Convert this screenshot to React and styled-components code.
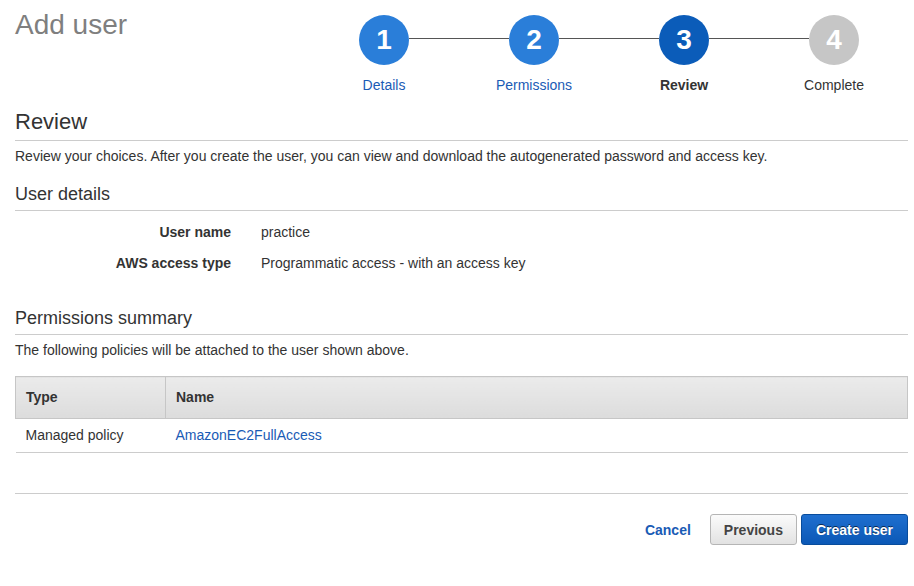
import React from "react";
import styled, { createGlobalStyle } from "styled-components";

const GlobalStyle = createGlobalStyle`
  body {
    margin: 0;
    background: #fff;
    color: #333;
    font-family: "Liberation Sans", Arial, Helvetica, sans-serif;
    font-size: 14px;
  }
`;

const Page = styled.div`
  padding: 0 6px 0 15px;
`;

const Header = styled.div`
  display: flex;
  justify-content: space-between;
  align-items: flex-start;
  padding-bottom: 15px;
`;

const PageTitle = styled.h1`
  margin: 9px 0 0;
  font-size: 28px;
  line-height: 32px;
  font-weight: normal;
  color: #7f7f7f;
`;

const Stepper = styled.div`
  display: flex;
  margin-right: -1px;
`;

const Step = styled.div`
  width: 150px;
  margin-top: 15px;
  display: flex;
  flex-direction: column;
  align-items: center;
`;

const CircleRow = styled.div`
  display: flex;
  align-items: flex-start;
  width: 100%;
`;

const Connector = styled.div`
  flex: 1;
  height: 1px;
  margin-top: 23px;
  background: ${(p) => (p.$hidden ? "transparent" : "#555")};
`;

const circleColors = {
  done: "#2a7ed9",
  current: "#0b5cb9",
  todo: "#c6c6c6",
};

const Circle = styled.div`
  width: 50px;
  height: 50px;
  border-radius: 50%;
  flex-shrink: 0;
  display: flex;
  align-items: center;
  justify-content: center;
  background: ${(p) => circleColors[p.$state]};
  color: #fff;
  font-size: 28px;
  font-weight: bold;
`;

const StepLabel = styled.div`
  margin-top: 11px;
  line-height: 18px;
  font-size: 14px;
  color: ${(p) => (p.$state === "done" ? "#1a5bb5" : "#333")};
  font-weight: ${(p) => (p.$state === "current" ? "bold" : "normal")};
`;

const SectionTitle = styled.h2`
  margin: ${(p) => p.$top}px 0 0;
  padding-bottom: 5px;
  border-bottom: 1px solid #cccccc;
  font-size: ${(p) => p.$size}px;
  line-height: ${(p) => p.$size + 4}px;
  font-weight: normal;
  color: #333;
`;

const Description = styled.p`
  margin: 5px 0 0;
  line-height: 20px;
  color: #333;
`;

const DetailList = styled.dl`
  margin: 11px 0 0;
  display: grid;
  grid-template-columns: 216px 1fr;
  column-gap: 30px;
  row-gap: 11px;
  line-height: 20px;
`;

const DetailLabel = styled.dt`
  text-align: right;
  font-weight: bold;
  color: #333;
`;

const DetailValue = styled.dd`
  margin: 0;
  color: #333;
`;

const Table = styled.table`
  margin-top: 16px;
  width: 100%;
  border-collapse: collapse;
`;

const HeadCell = styled.th`
  width: ${(p) => p.$width || "auto"};
  padding: 11px 10px;
  line-height: 19px;
  text-align: left;
  font-weight: bold;
  color: #333;
  background: linear-gradient(#ebebeb, #dcdcdc);
  border: 1px solid #c6c6c6;
`;

const Cell = styled.td`
  padding: 7px 10px;
  line-height: 19px;
  color: #333;
  border-bottom: 1px solid #cccccc;
`;

const Link = styled.a`
  color: #1a5bb5;
  text-decoration: none;
  cursor: pointer;
  font-weight: ${(p) => (p.$bold ? "bold" : "normal")};
`;

const Footer = styled.div`
  margin-top: 40px;
  padding-top: 20px;
  border-top: 1px solid #cccccc;
  display: flex;
  justify-content: flex-end;
  align-items: center;
  gap: 4px;
`;

const CancelLink = styled(Link)`
  margin-right: 15px;
`;

const Button = styled.button`
  box-sizing: border-box;
  height: 31px;
  padding: 0 ${(p) => (p.$primary ? 14 : 13)}px;
  border-radius: 3px;
  font-family: inherit;
  font-size: 14px;
  font-weight: bold;
  cursor: pointer;
  border: 1px solid ${(p) => (p.$primary ? "#084c9c" : "#b5b5b5")};
  color: ${(p) => (p.$primary ? "#fff" : "#444")};
  background: ${(p) =>
    p.$primary
      ? "linear-gradient(#1f6fcf, #0b58b6)"
      : "linear-gradient(#fbfbfb, #e2e2e2)"};
  text-shadow: ${(p) => (p.$primary ? "0 -1px 0 rgba(0,0,0,0.6)" : "none")};
`;

const steps = [
  { label: "Details", state: "done" },
  { label: "Permissions", state: "done" },
  { label: "Review", state: "current" },
  { label: "Complete", state: "todo" },
];

const details = [
  ["User name", "practice"],
  ["AWS access type", "Programmatic access - with an access key"],
];

export default function App() {
  return (
    <Page>
      <GlobalStyle />
      <Header>
        <PageTitle>Add user</PageTitle>
        <Stepper>
          {steps.map((step, i) => (
            <Step key={step.label}>
              <CircleRow>
                <Connector $hidden={i === 0} />
                <Circle $state={step.state}>{i + 1}</Circle>
                <Connector $hidden={i === steps.length - 1} />
              </CircleRow>
              <StepLabel $state={step.state}>{step.label}</StepLabel>
            </Step>
          ))}
        </Stepper>
      </Header>

      <SectionTitle $size={22} $top={0}>
        Review
      </SectionTitle>
      <Description>
        Review your choices. After you create the user, you can view and
        download the autogenerated password and access key.
      </Description>

      <SectionTitle $size={18} $top={17}>
        User details
      </SectionTitle>
      <DetailList>
        {details.map(([label, value]) => (
          <React.Fragment key={label}>
            <DetailLabel>{label}</DetailLabel>
            <DetailValue>{value}</DetailValue>
          </React.Fragment>
        ))}
      </DetailList>

      <SectionTitle $size={18} $top={34}>
        Permissions summary
      </SectionTitle>
      <Description>
        The following policies will be attached to the user shown above.
      </Description>

      <Table>
        <thead>
          <tr>
            <HeadCell $width="129px">Type</HeadCell>
            <HeadCell>Name</HeadCell>
          </tr>
        </thead>
        <tbody>
          <tr>
            <Cell>Managed policy</Cell>
            <Cell>
              <Link>AmazonEC2FullAccess</Link>
            </Cell>
          </tr>
        </tbody>
      </Table>

      <Footer>
        <CancelLink $bold>Cancel</CancelLink>
        <Button>Previous</Button>
        <Button $primary>Create user</Button>
      </Footer>
    </Page>
  );
}
